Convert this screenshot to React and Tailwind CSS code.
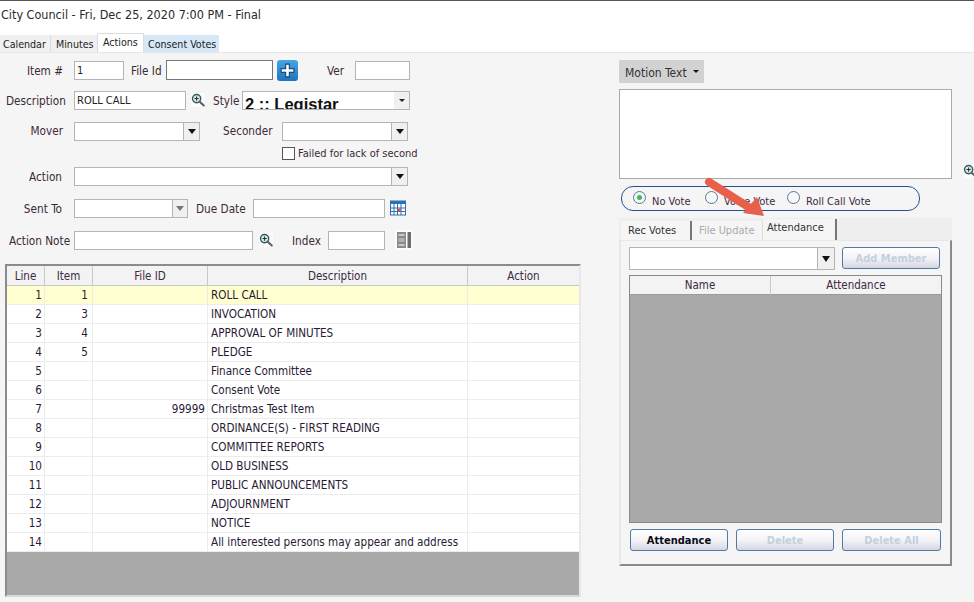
import React from "react";

const F = { fontFamily: '"DejaVu Sans Condensed","DejaVu Sans",sans-serif', fontStretch: "condensed" };

function Lens({ className = "" }) {
  return (
    <svg viewBox="0 0 15 15" className={className}>
      <rect width="15" height="15" fill="#fbfbfb" />
      <circle cx="6" cy="6" r="4.4" fill="#d8e8e6" stroke="#35585c" strokeWidth="1.5" />
      <path d="M6 3.8v4.4M3.8 6h4.4" stroke="#1f3338" strokeWidth="1.1" />
      <path d="M9.3 9.3l4.4 4.2" stroke="#5a6068" strokeWidth="2.2" strokeLinecap="round" />
    </svg>
  );
}

function Label({ w, ml = 0, children, right = true, cls = "pt-[3px]" }) {
  return (
    <div
      className={`shrink-0 text-[11.7px] text-[#3d2a35] whitespace-nowrap ${right ? "text-right" : ""} ${cls}`}
      style={{ width: w, marginLeft: ml }}
    >
      {children}
    </div>
  );
}

function Input({ w, ml = 0, h = 19, dark = false, children }) {
  return (
    <div
      className={`shrink-0 bg-white border flex items-center pl-[2px] pt-[2px] text-[11px] text-[#222] ${dark ? "border-[#777]" : "border-[#b4b4b4]"}`}
      style={{ width: w, height: h, marginLeft: ml }}
    >
      {children}
    </div>
  );
}

function Combo({ w, ml = 0, h = 19, disabled = false, arrowW = 16, big = false }) {
  return (
    <div
      className="shrink-0 bg-white border border-[#b4b4b4] flex justify-end"
      style={{ width: w, height: h, marginLeft: ml }}
    >
      <div className="bg-[#f0f0f0] border-l border-[#b4b4b4] flex items-center justify-center" style={{ width: arrowW }}>
        <div
          className={`w-0 h-0 border-l-transparent border-r-transparent ${big ? "border-l-[4px] border-r-[4px] border-t-[6px]" : "border-l-[4px] border-r-[4px] border-t-[5px]"} ${disabled ? "border-t-[#777]" : "border-t-[#111]"}`}
        />
      </div>
    </div>
  );
}

function Btn({ w, ml = 0, disabled, children, h = 22 }) {
  return (
    <div
      className={`shrink-0 rounded-[3px] border border-[#4f7aa3] bg-gradient-to-b from-white via-[#f4f4f8] to-[#d6d6e2] flex items-center justify-center pt-[2px] text-[11px] font-bold ${disabled ? "text-[#c4d0dd]" : "text-[#0a0a14]"}`}
      style={{ width: w, height: h, marginLeft: ml }}
    >
      {children}
    </div>
  );
}

function Radio({ on, w, label }) {
  return (
    <div className="flex items-center shrink-0" style={{ width: w }}>
      <div className="w-[13px] h-[13px] shrink-0 rounded-full border border-[#5d7790] bg-[#f6f8fa] flex items-center justify-center -mt-[2px]">
        {on && <div className="w-[5px] h-[5px] rounded-full bg-[#3dbb4c]" />}
      </div>
      <div className="ml-[6px] mt-[8px] text-[11px] text-[#3d2a45] whitespace-nowrap">{label}</div>
    </div>
  );
}

const rows = [
  [1, 1, "", "ROLL CALL"],
  [2, 3, "", "INVOCATION"],
  [3, 4, "", "APPROVAL OF MINUTES"],
  [4, 5, "", "PLEDGE"],
  [5, "", "", "Finance Committee"],
  [6, "", "", "Consent Vote"],
  [7, "", "99999", "Christmas Test Item"],
  [8, "", "", "ORDINANCE(S) - FIRST READING"],
  [9, "", "", "COMMITTEE REPORTS"],
  [10, "", "", "OLD BUSINESS"],
  [11, "", "", "PUBLIC ANNOUNCEMENTS"],
  [12, "", "", "ADJOURNMENT"],
  [13, "", "", "NOTICE"],
  [14, "", "", "All interested persons may appear and address"],
];

const cols = "grid grid-cols-[38px_48px_115px_260px_1fr]";

export default function App() {
  return (
    <div className="relative w-[974px] h-[602px] overflow-hidden bg-[#f5f5f5] text-[#222]" style={F}>
      {/* header */}
      <div className="bg-white h-[53px] border-t border-[#555] border-b border-b-[#e6e6e6] flex flex-col">
        <div className="pl-[1px] pt-[5px] h-[35px] text-[12.5px] text-[#2a2a2a] leading-[18px]">
          City Council - Fri, Dec 25, 2020 7:00 PM - Final
        </div>
        <div className="flex items-end h-[17px] text-[10.6px] text-[#222] whitespace-nowrap">
          <div className="w-[51px] h-[17px] bg-[#f0f0f0] border-r border-[#dcdcdc] pl-[3px] leading-[18px]">Calendar</div>
          <div className="w-[46px] h-[17px] bg-[#f0f0f0] pl-[5px] leading-[18px]">Minutes</div>
          <div className="w-[47px] h-[19px] bg-white border-x border-t border-[#dcdcdc] pl-[5px] leading-[16px]">Actions</div>
          <div className="w-[75px] h-[17px] bg-[#d6e8f8] pl-[4px] leading-[18px]">Consent Votes</div>
        </div>
      </div>

      <div className="flex">
        {/* left column */}
        <div className="w-[619px] shrink-0 pt-[7px]">
          <div className="flex items-center h-[20px]">
            <Label w={63}>Item #</Label>
            <Input w={50} ml={11}>1</Input>
            <Label w={32} ml={7} right={false}>File Id</Label>
            <Input w={107} ml={3} h={20} dark />
            <div className="ml-[4px] w-[21px] h-[21px] rounded-[3px] bg-gradient-to-b from-[#46a6e6] to-[#1f74bd] flex items-center justify-center shrink-0">
              <svg viewBox="0 0 16 16" className="w-[17px] h-[17px]">
                <path d="M8 1.5v13M1.5 8h13" stroke="#123f6a" strokeWidth="4.2" />
                <path d="M8 2.5v11M2.5 8h11" stroke="#fff" strokeWidth="2.4" />
              </svg>
            </div>
            <Label w={19} ml={29} right={false}>Ver</Label>
            <Input w={55} ml={9} />
          </div>

          <div className="flex items-center h-[20px] mt-[10px]">
            <Label w={60} ml={6} right={false}>Description</Label>
            <Input w={112} ml={8}>ROLL CALL</Input>
            <Lens className="ml-[5px] w-[14px] h-[14px] shrink-0" />
            <Label w={26} ml={8} right={false}>Style</Label>
            <div className="ml-[3px] w-[168px] h-[19px] shrink-0 bg-white border border-[#b4b4b4] flex overflow-hidden">
              <div
                className="flex-1 pl-[2px] text-[16.5px] font-bold text-[#111] leading-[24px] whitespace-nowrap overflow-hidden"
                style={{ fontFamily: '"Liberation Sans",sans-serif', fontStretch: "normal" }}
              >
                2 :: Legistar
              </div>
              <div className="w-[15px] bg-[#f0f0f0] flex items-center justify-center">
                <div className="w-0 h-0 border-l-[3px] border-r-[3px] border-t-[3px] border-l-transparent border-r-transparent border-t-[#222]" />
              </div>
            </div>
          </div>

          <div className="flex items-center h-[20px] mt-[11px]">
            <Label w={63} cls="pt-[1px]">Mover</Label>
            <Combo w={126} ml={11} />
            <Label w={50} ml={23} right={false} cls="pt-[1px]">Seconder</Label>
            <Combo w={126} ml={9} />
          </div>

          <div className="flex items-center h-[14px] mt-[5px]">
            <div className="ml-[282px] w-[13px] h-[13px] shrink-0 border border-[#555] bg-white" />
            <div className="ml-[3px] pt-[2px] text-[11px] text-[#3d2a35] whitespace-nowrap">Failed for lack of second</div>
          </div>

          <div className="flex items-center h-[20px] mt-[6px]">
            <Label w={62}>Action</Label>
            <Combo w={334} ml={12} />
          </div>

          <div className="flex items-center h-[20px] mt-[12px]">
            <Label w={62}>Sent To</Label>
            <Combo w={114} ml={12} disabled arrowW={15} />
            <Label w={49} ml={8} right={false}>Due Date</Label>
            <Input w={132} ml={8} />
            <svg viewBox="0 0 16 16" className="ml-[5px] w-[16px] h-[16px] shrink-0">
              <rect x="0.5" y="1" width="15" height="14" fill="#fff" stroke="#2f6fb0" />
              <rect x="0.5" y="1" width="15" height="3" fill="#2b6fb5" />
              <path d="M4 4v11M7.5 4v11M11 4v11M1 8h14M1 11.5h14" stroke="#2f6fb0" strokeWidth="1" />
              <rect x="8" y="8.5" width="3" height="3" fill="#d55" />
            </svg>
          </div>

          <div className="flex items-center h-[20px] mt-[12px]">
            <Label w={62} ml={9} right={false}>Action Note</Label>
            <Input w={179} ml={3} />
            <Lens className="ml-[6px] w-[14px] h-[14px] shrink-0" />
            <Label w={30} ml={19} right={false}>Index</Label>
            <Input w={57} ml={6} />
            <div className="ml-[10px] w-[18px] h-[20px] bg-[#fbfbfb] flex items-center justify-center shrink-0">
              <svg viewBox="0 0 14 16" className="w-[14px] h-[16px]">
                <rect x="0" y="0" width="9" height="16" fill="#8a8a8a" />
                <rect x="1.5" y="2" width="6" height="2" fill="#c8c8c8" />
                <rect x="1.5" y="6" width="6" height="4" fill="#b0b0b0" />
                <rect x="1.5" y="12" width="6" height="2" fill="#c8c8c8" />
                <rect x="10.5" y="0" width="3.5" height="16" fill="#6e6e6e" />
              </svg>
            </div>
          </div>

          {/* grid */}
          <div className="ml-[5px] mt-[14px] w-[576px] h-[333px] border-2 border-[#8c8c8c] border-r-[#e8e8e8] border-b-[#d8d8d8] bg-[#a9a9a9] flex flex-col">
            <div className={`${cols} h-[20px] bg-[#f3f3f3] border-b border-[#c8c8c8] text-[11.5px] text-[#3d2a45] text-center leading-[20px]`}>
              <div className="border-r border-[#c8c8c8]">Line</div>
              <div className="border-r border-[#c8c8c8]">Item</div>
              <div className="border-r border-[#c8c8c8]">File ID</div>
              <div className="border-r border-[#c8c8c8]">Description</div>
              <div>Action</div>
            </div>
            {rows.map((r, i) => (
              <div
                key={r[0]}
                className={`${cols} h-[19px] border-b border-[#ececec] text-[11.6px] text-[#2a1a35] leading-[18px] ${i === 0 ? "bg-[#ffffcf]" : "bg-white"}`}
              >
                <div className="border-r border-[#ececec] text-right pr-[2px]">{r[0]}</div>
                <div className="border-r border-[#ececec] text-right pr-[4px]">{r[1]}</div>
                <div className="border-r border-[#ececec] text-right pr-[2px]">{r[2]}</div>
                <div className="border-r border-[#ececec] pl-[3px] whitespace-nowrap">{r[3]}</div>
                <div />
              </div>
            ))}
          </div>
        </div>

        {/* right column */}
        <div className="w-[355px] shrink-0 pt-[7px]">
          <div className="w-[85px] h-[23px] bg-[#d2d2d2] flex items-center pl-[6px] pt-[2px] text-[12px] text-[#333]">
            Motion Text
            <div className="ml-[6px] -mt-[2px] w-0 h-0 border-l-[3px] border-r-[3px] border-t-[3px] border-l-transparent border-r-transparent border-t-[#111]" />
          </div>
          <div className="flex items-end mt-[6px]">
            <div className="w-[333px] h-[90px] bg-white border border-[#aaa] shrink-0" />
            <Lens className="ml-[11px] mb-[1px] w-[14px] h-[14px] shrink-0" />
          </div>
          <div className="ml-[2px] mt-[7px] w-[299px] h-[25px] rounded-[12px] border border-[#24568c] flex items-center pl-[11px]">
            <Radio on w={72} label="No Vote" />
            <Radio w={82} label="Voice Vote" />
            <Radio label="Roll Call Vote" />
          </div>

          <div className="mt-[7px] w-[333px] h-[22px] bg-[#eeeeee] flex items-end pl-[2px] text-[11px]">
            <div className="w-[71px] h-[19px] bg-[#f5f5f5] border-r-2 border-[#777] pl-[7px] leading-[19px] text-[#333] shrink-0">Rec Votes</div>
            <div className="w-[71px] h-[19px] bg-[#f5f5f5] border-r border-[#ddd] pl-[7px] leading-[19px] text-[#aaa] shrink-0">File Update</div>
            <div className="w-[74px] h-[21px] bg-[#f5f5f5] border-r-2 border-[#777] pl-[4px] leading-[18px] text-[#333] shrink-0">Attendance</div>
          </div>

          <div className="w-[333px] h-[326px] border-2 border-t border-[#e8e8e8] border-r-[#8a8a8a] border-b-[#8a8a8a] px-[8px] pt-[6px] flex flex-col">
            <div className="flex items-start">
              <Combo w={206} h={23} arrowW={17} big />
              <Btn w={98} ml={7} disabled>Add Member</Btn>
            </div>
            <div className="mt-[5px] w-[313px] h-[248px] border border-[#8a8a8a] bg-[#a9a9a9] shrink-0">
              <div className="grid grid-cols-[141px_1fr] h-[19px] bg-[#f3f3f3] text-[11.5px] text-[#3d2a45] text-center leading-[19px] border-b border-[#9a9a9a]">
                <div className="border-r border-[#c8c8c8]">Name</div>
                <div>Attendance</div>
              </div>
            </div>
            <div className="flex mt-[6px] ml-[1px]">
              <Btn w={98}>Attendance</Btn>
              <Btn w={98} ml={8} disabled>Delete</Btn>
              <Btn w={99} ml={8} disabled>Delete All</Btn>
            </div>
          </div>
        </div>
      </div>

      {/* annotation arrow */}
      <svg className="absolute left-[700px] top-[172px] w-[70px] h-[50px]" viewBox="0 0 70 50">
        <path d="M9 10L50 36" stroke="#e8604c" strokeWidth="8" strokeLinecap="round" />
        <path d="M64 44L43 41L57 25Z" fill="#e8604c" />
      </svg>
    </div>
  );
}
